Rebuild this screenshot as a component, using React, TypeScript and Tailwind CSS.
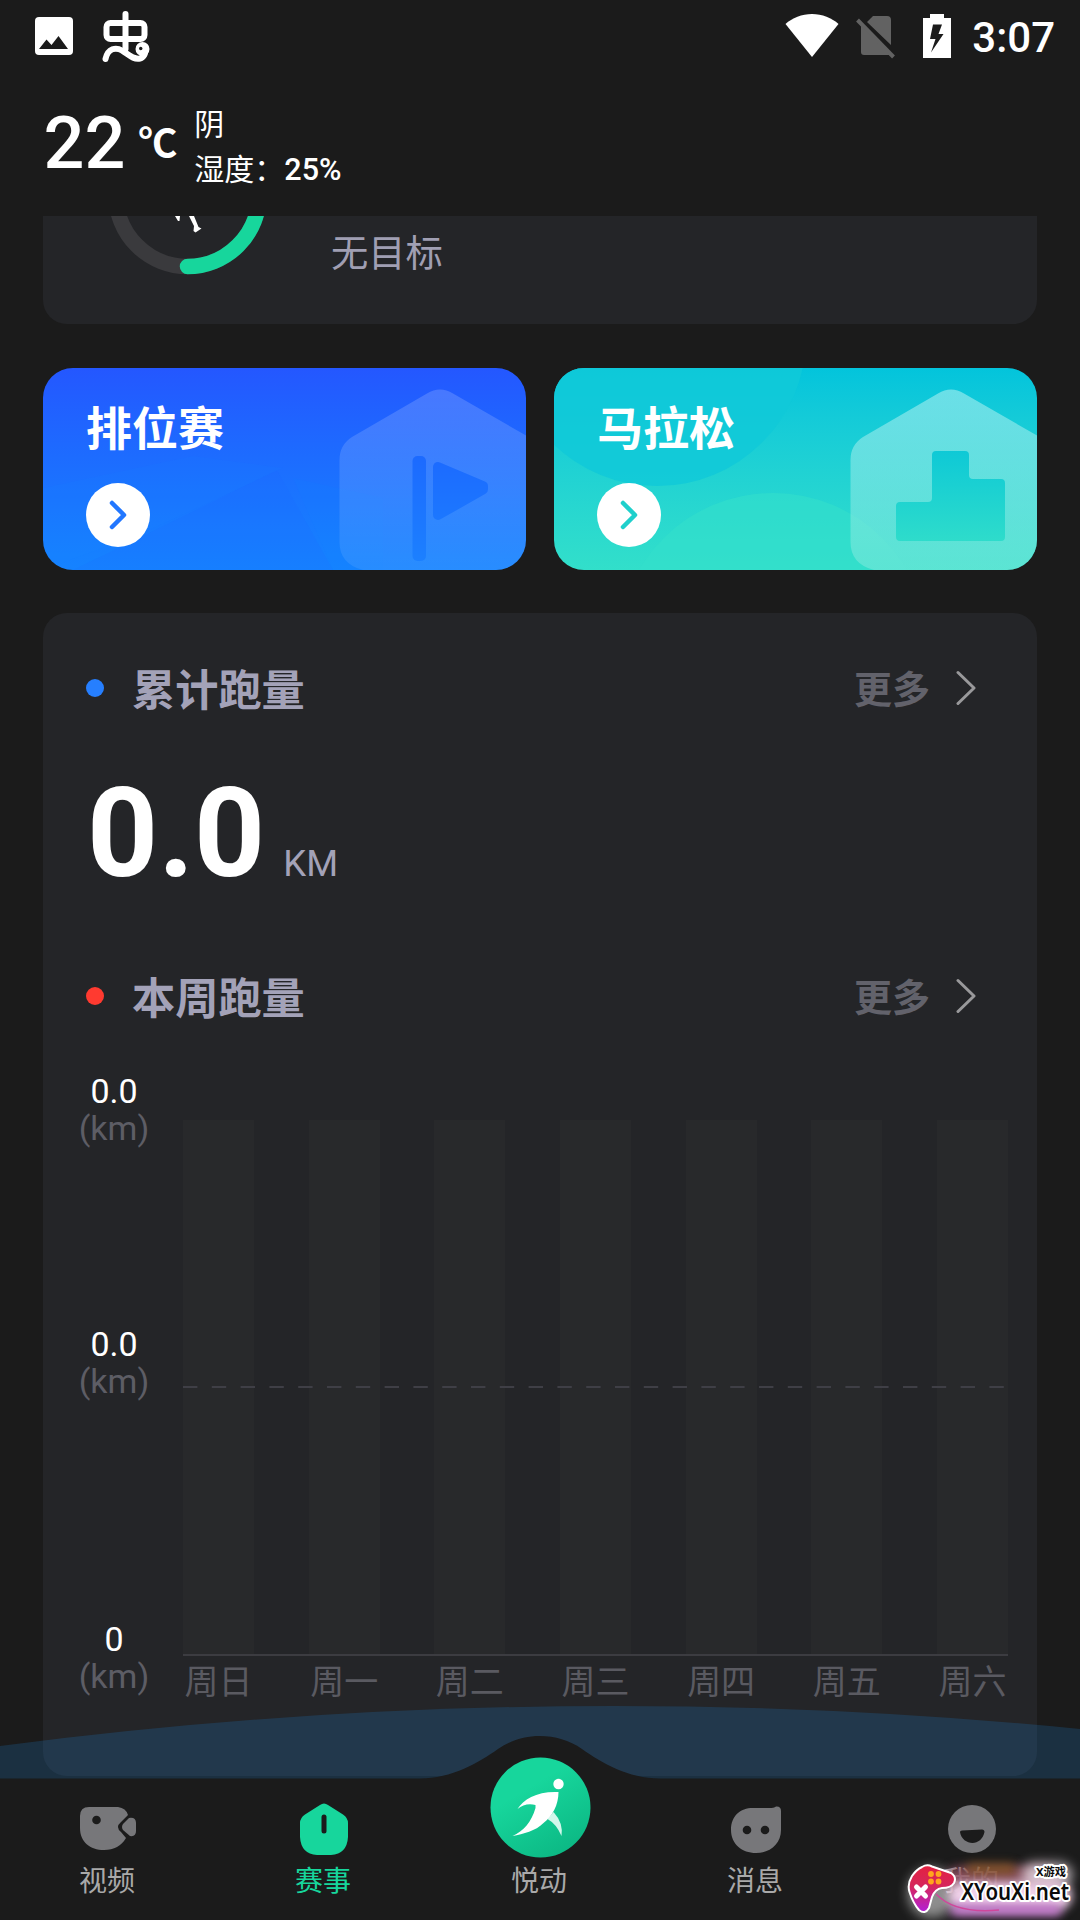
import type { ReactNode } from "react";

interface RaceCardProps {
  title: string;
  className: string;
  arrowColor: string;
  children: ReactNode;
}

interface SectionTitleProps {
  title: string;
  dotClass: string;
}

interface NavItemProps {
  label: string;
  active?: boolean;
  children: ReactNode;
}

const days = ["周日", "周一", "周二", "周三", "周四", "周五", "周六"];

const HEXAGON =
  "M384 25.500Q397 17.500 410 25.500L483 67.500V202H320Q296.500 196 296.500 174V92Q296.500 77 309 69Z";

function StatusBar() {
  return (
    <div className="flex h-[72px] items-start justify-between pr-[25px] pl-[34px]">
      <div className="flex items-start">
        <svg className="mt-4 h-10 w-10" viewBox="0 0 40 40">
          <rect x="1" y="1" width="38" height="38" rx="4" fill="#fff" />
          <path d="M5 33 12.5 23.5 17.5 29 24.5 20 34 33Z" fill="#1b1b1b" />
        </svg>
        <svg
          className="mt-[10px] ml-7 h-[54px] w-[50px]"
          viewBox="0 0 50 54"
          fill="none"
          stroke="#fff"
          strokeWidth="6"
          strokeLinecap="round"
          strokeLinejoin="round"
        >
          <rect x="4.500" y="13" width="38" height="16" rx="4" />
          <path d="M23.500 4V39" />
          <path d="M3.500 49C6 38 14 37 20 40.500C27 45 32 50 38 48.500C42 47.500 44 43 43 39" />
          <circle cx="40.500" cy="39" r="4" />
          <circle cx="38.700" cy="38.500" r="1.700" fill="#1b1b1b" stroke="none" />
        </svg>
      </div>
      <div className="flex items-start">
        <svg className="mt-[14px] h-[44px] w-[54px]" viewBox="0 0 54 44">
          <path d="M27 43 0.500 10C7 4 17 0 27 0S47 4 53.500 10Z" fill="#fff" />
        </svg>
        <svg className="mt-4 ml-[17px] h-[43px] w-[40px]" viewBox="0 0 40 43">
          <path
            d="M17 0H31Q35 0 35 4V29L11 6ZM5 9.500 34 39H8Q5 39 5 36Z"
            fill="#626262"
          />
          <path d="M1.500 4 37.500 41" stroke="#626262" strokeWidth="4" />
        </svg>
        <svg className="mt-[14px] ml-[27px] h-[44px] w-[28px]" viewBox="0 0 28 44">
          <path d="M7 0H21V4H28V44H0V4H7Z" fill="#fff" />
          <path d="M10 10.500H19L15.500 20H20.500L8 38.500 12.500 25H7Z" fill="#1b1b1b" />
        </svg>
        <span className="mt-[14px] ml-[21px] text-[42px] leading-[48px] font-medium">
          3:07
        </span>
      </div>
    </div>
  );
}

function Weather() {
  return (
    <div className="flex h-36 pl-[43.5px]">
      <span className="mt-[32px] text-[72px] leading-[80px] font-medium">22</span>
      <span className="mt-[49px] ml-[13px] text-[39px] leading-[46px] font-bold">℃</span>
      <div className="mt-[35px] ml-[17px] text-[30px]">
        <p className="h-[45px] leading-[36px]">阴</p>
        <p className="leading-[36px]">
          湿度：<span className="text-[30.5px] font-medium">25%</span>
        </p>
      </div>
    </div>
  );
}

function GoalCard() {
  return (
    <div className="flex h-[108px] shrink-0 rounded-b-3xl bg-[#242528]">
      <svg className="ml-[60px] h-[70px] w-[170px]" viewBox="0 0 170 70" fill="none">
        <circle cx="84.500" cy="-21" r="71.500" stroke="#3a3a3d" strokeWidth="15.500" />
        <path
          d="M84.500 50.500A71.500 71.500 0 0 0 156 -21"
          stroke="#17d69c"
          strokeWidth="15.500"
          strokeLinecap="round"
        />
        <path d="M72 0H77L76.500 5H75ZM86 0H91L95.500 11 98.500 12.500 92.500 16.500 90.500 15 91 10Z" fill="#fff" />
      </svg>
      <p className="mt-[12px] ml-[58px] text-[37.3px] leading-[52px] text-[#a09fb3]">无目标</p>
    </div>
  );
}

function RaceCard({ title, className, arrowColor, children }: RaceCardProps) {
  return (
    <div className={`relative h-[202px] w-[483px] overflow-hidden rounded-[30px] ${className}`}>
      {children}
      <div className="relative flex h-full flex-col items-start pt-[31px] pl-[43px]">
        <h2 className="text-[46px] leading-[60px] font-bold">{title}</h2>
        <div className="mt-[24px] flex h-16 w-16 items-center justify-center rounded-full bg-white">
          <svg className="h-[30px] w-[18px]" viewBox="0 0 18 30" fill="none">
            <path
              d="M3 3 15 15 3 27"
              stroke={arrowColor}
              strokeWidth="4.500"
              strokeLinecap="round"
              strokeLinejoin="round"
            />
          </svg>
        </div>
      </div>
    </div>
  );
}

function RankedArt() {
  return (
    <svg className="absolute inset-0 h-full w-full" viewBox="0 0 483 202">
      <defs>
        <linearGradient id="flag" gradientUnits="userSpaceOnUse" x1="0" y1="88" x2="0" y2="193">
          <stop offset="0" stopColor="#1c6aff" />
          <stop offset="1" stopColor="#1c80ff" />
        </linearGradient>
        <linearGradient id="hexBlue" x1="0" y1="0" x2="0" y2="1">
          <stop offset="0" stopColor="#fff" stopOpacity="0.17" />
          <stop offset="1" stopColor="#fff" stopOpacity="0.08" />
        </linearGradient>
      </defs>
      <path d="M150 88 240 100 100 165 0 202V120Z" fill="#148bff" opacity="0.08" />
      <path d="M234 102 290 202H30L145 146Z" fill="#1f5fff" opacity="0.12" />
      <path d="M250 110 340 130V202H290Z" fill="#1090ff" opacity="0.08" />
      <path d={HEXAGON} fill="url(#hexBlue)" />
      <rect x="369.500" y="88" width="13.500" height="105" rx="5" fill="url(#flag)" />
      <path
        d="M395 99V147L440 121.500V118Z"
        fill="url(#flag)"
        stroke="url(#flag)"
        strokeWidth="10"
        strokeLinejoin="round"
      />
    </svg>
  );
}

function MarathonArt() {
  return (
    <svg className="absolute inset-0 h-full w-full" viewBox="0 0 483 202">
      <defs>
        <linearGradient id="podium" x1="0" y1="0" x2="0" y2="1">
          <stop offset="0" stopColor="#0ec9d6" />
          <stop offset="1" stopColor="#2edccb" />
        </linearGradient>
        <linearGradient id="hexTeal" x1="0" y1="0" x2="0" y2="1">
          <stop offset="0" stopColor="#a5eef0" stopOpacity="0.62" />
          <stop offset="1" stopColor="#a5eee4" stopOpacity="0.36" />
        </linearGradient>
      </defs>
      <circle cx="103" cy="-31" r="149" fill="#10c9d8" opacity="0.85" />
      <circle cx="219" cy="280" r="155" fill="#34dfcb" opacity="0.6" />
      <path d={HEXAGON} fill="url(#hexTeal)" />
      <path
        d="M382 83H411Q415 83 415 87V107Q415 111 419 111H447Q451 111 451 115V169Q451 173 447 173H346Q342 173 342 169V138Q342 134 346 134H374Q378 134 378 130V87Q378 83 382 83Z"
        fill="url(#podium)"
      />
    </svg>
  );
}

function SectionTitle({ title, dotClass }: SectionTitleProps) {
  return (
    <div className="flex h-[60px] items-center pr-[61px] pl-[43px]">
      <span className={`mb-[7px] h-[18px] w-[18px] rounded-full ${dotClass}`} />
      <h3 className="mt-[2px] ml-7 text-[43.2px] leading-[60px] font-bold text-[#a3a2b8]">{title}</h3>
      <span className="mb-[3px] ml-auto text-[38px] leading-[56px] font-bold text-[#62626b]">更多</span>
      <svg className="mb-[6px] ml-[26px] h-[36px] w-[20px]" viewBox="0 0 20 36" fill="none">
        <path
          d="M2 2.500 18 18 2 33.500"
          stroke="#99999b"
          strokeWidth="3"
          strokeLinecap="round"
          strokeLinejoin="round"
        />
      </svg>
    </div>
  );
}

function AxisLabel({ value }: { value: string }) {
  return (
    <div className="text-center text-[34px] leading-[37px]">
      <p>{value}</p>
      <p className="text-[#5d5d65]">(km)</p>
    </div>
  );
}

function WeekChart() {
  return (
    <div className="flex">
      <div className="ml-[34px] flex w-[74px] flex-col">
        <AxisLabel value="0.0" />
        <div className="mt-[179px]">
          <AxisLabel value="0.0" />
        </div>
        <div className="mt-[221px]">
          <AxisLabel value="0" />
        </div>
      </div>
      <div className="mt-[47px] ml-8 w-[825px]">
        <div className="relative flex h-[536px] justify-between border-b-2 border-[#3c3c41]">
          {days.map((day) => (
            <div key={day} className="h-full w-[71px] bg-[#28292b]" />
          ))}
          <svg className="absolute top-[266px] left-0 h-[2px] w-[825px]" viewBox="0 0 825 2">
            <path d="M0 1H825" stroke="#3f3f46" strokeWidth="2" strokeDasharray="14.400 14.400" />
          </svg>
        </div>
        <div className="mt-1 flex justify-between">
          {days.map((day) => (
            <span key={day} className="w-[71px] text-center text-[34px] leading-[44px] text-[#5a5a61]">
              {day}
            </span>
          ))}
        </div>
      </div>
    </div>
  );
}

function NavItem({ label, active, children }: NavItemProps) {
  return (
    <div className="flex w-[216px] flex-col items-center">
      <div className="flex h-[108px] items-end justify-center">{children}</div>
      <span
        className={`mr-[2px] text-[28px] leading-[40px] ${active ? "text-[#17d69c]" : "text-[#a9a9a9]"}`}
      >
        {label}
      </span>
    </div>
  );
}

function BottomNav() {
  return (
    <nav className="absolute inset-x-0 bottom-0 h-[220px]">
      <svg className="absolute inset-0 h-full w-full" viewBox="0 0 1080 220">
        <path d="M0 46Q540 -24.400 1080 29V79H0Z" fill="#2085de" opacity="0.2" />
        <path
          d="M0 78.500H420C452 78.500 478 63 498 49C511 40 525 36 540 36S569 40 582 49C602 63 628 78.500 660 78.500H1080V220H0Z"
          fill="#1b1b1b"
        />
      </svg>
      <div className="relative flex pt-[54px]">
        <NavItem label="视频">
          <svg className="mb-[10px] h-[46px] w-[58px]" viewBox="0 0 58 46" fill="#77777a">
            <path d="M10 1H39Q47 2 49 9L42 16Q36 21 42 26L47 32Q40 44 25 44C11 44 1 36 1 22V10Q1 1 10 1Z" />
            <path d="M50 12Q57 11 57 17V25Q57 31 51 30L44 24Q42 21 44 18Z" />
            <circle cx="17.500" cy="14" r="4.300" fill="#1b1b1b" />
          </svg>
        </NavItem>
        <NavItem label="赛事" active>
          <svg className="mb-[7px] h-[52px] w-[48px]" viewBox="0 0 48 52">
            <path
              d="M20 2Q24 -1 28 2L43 11.500Q48 15 48 20V34Q47 51 31 52H17Q1 51 0 34V20Q0 15 5 11.500Z"
              fill="#17d69c"
            />
            <path d="M24 14V28" stroke="#1b1b1b" strokeWidth="5" strokeLinecap="round" />
          </svg>
        </NavItem>
        <NavItem label="悦动">
          <svg className="mb-[4px] h-[101px] w-[101px]" viewBox="0 0 100 101">
            <defs>
              <linearGradient id="run" x1="0.200" y1="0" x2="0.800" y2="1">
                <stop offset="0.300" stopColor="#17d69c" />
                <stop offset="1" stopColor="#0bb682" />
              </linearGradient>
            </defs>
            <circle cx="50" cy="50.500" r="50" fill="url(#run)" />
            <circle cx="68" cy="27" r="5.200" fill="#fff" />
            <path d="M63 55 57 62Q66 67 71 79Q73 66 63 55Z" fill="#d2f7eb" />
            <path
              d="M68 35C68 48 62 59 53 66C45 74 33 77 22 79C33 74 41 65 45 51L45 48C38 46 32 48 27 52C33 42 47 34 68 35Z"
              fill="#fff"
            />
          </svg>
        </NavItem>
        <NavItem label="消息">
          <svg className="mb-[9px] h-[47px] w-[50px]" viewBox="0 0 50 47">
            <path
              d="M22 2H38Q43 2 45 0.500Q50 0 50 5V24C50 38 39 47 25 47S0 38 0 24C0 10 9 2 22 2Z"
              fill="#77777a"
            />
            <circle cx="16" cy="24" r="4.300" fill="#1b1b1b" />
            <circle cx="34" cy="24" r="4.300" fill="#1b1b1b" />
          </svg>
        </NavItem>
        <NavItem label="我的">
          <svg className="mb-[9px] h-[48px] w-[48px]" viewBox="0 0 48 48">
            <circle cx="24" cy="24" r="24" fill="#77777a" />
            <path d="M12 27Q12 25.500 14 25.500L34 24.500Q36.500 24.500 36.500 27C35 34 30 38 24.500 38S13 34 12 27Z" fill="#1b1b1b" />
          </svg>
        </NavItem>
      </div>
    </nav>
  );
}

function Watermark() {
  return (
    <div className="absolute right-0 bottom-0 h-[70px] w-[180px]">
      <div className="absolute top-[18px] left-[8px] h-[50px] w-[48px] rounded-full bg-white/50 blur-[6px]" />
      <div className="absolute top-[16px] left-[46px] h-[28px] w-[112px] rounded-full bg-[#8e4f60]/85 blur-[5px]" />
      <div className="absolute top-[13px] left-[66px] h-[12px] w-[50px] rounded-full bg-[#8a5a1e]/70 blur-[5px]" />
      <div className="absolute top-[13px] left-[122px] h-[24px] w-[50px] rounded-full bg-[#e8dfe6]/80 blur-[6px]" />
      <div className="absolute top-[32px] left-[48px] h-[28px] w-[124px] rounded-full bg-[#f0d2ea] blur-[5px]" />
      <div className="absolute top-[54px] left-[50px] h-[12px] w-[112px] rounded-full bg-[#c77bd0] blur-[5px]" />
      <svg className="absolute top-[14px] left-[7px] h-[52px] w-[110px]" viewBox="0 0 110 52">
        <defs>
          <linearGradient id="pad" x1="0" y1="0" x2="0" y2="1">
            <stop offset="0" stopColor="#e4213f" />
            <stop offset="0.450" stopColor="#d5265c" />
            <stop offset="1" stopColor="#b21fd8" />
          </linearGradient>
        </defs>
        <path d="M29 30Q48 50 92 46" fill="none" stroke="#d0479b" strokeWidth="1.500" />
        <path
          d="M15 3Q20 0 25 2.500L44 9Q50 13 47 19Q44 24 35 24Q28 25 25 33L22 44Q18 51 12 46Q6 39 2.500 28Q0 20 5 12Q9 6 15 3Z"
          fill="url(#pad)"
          stroke="#fff"
          strokeWidth="2"
        />
        <path d="M9.500 23 18.500 32M18.500 23 9.500 32" stroke="#fff" strokeWidth="5" strokeLinecap="round" />
        <g fill="#ffa51e">
          <circle cx="24" cy="10" r="2.900" />
          <circle cx="31.500" cy="10" r="2.900" />
          <circle cx="24" cy="17.500" r="2.900" />
          <circle cx="31.500" cy="17.500" r="2.900" />
        </g>
      </svg>
      <svg className="absolute inset-0 h-full w-full" viewBox="0 0 180 70">
        <g fill="#0b0b0b" stroke="#fff" strokeLinejoin="round" paintOrder="stroke" fontWeight="700">
          <text
            x="136"
            y="26"
            fontSize="11"
            strokeWidth="4"
            textLength="30"
            lengthAdjust="spacingAndGlyphs"
            fontFamily='"Noto Sans", "Noto Sans CJK SC", sans-serif'
          >
            X游戏
          </text>
          <text
            x="61"
            y="50"
            fontSize="24"
            strokeWidth="4"
            fontWeight="600"
            textLength="108"
            lengthAdjust="spacingAndGlyphs"
            fontFamily='"Noto Sans", sans-serif'
          >
            XYouXi.net
          </text>
        </g>
      </svg>
    </div>
  );
}

export default function App() {
  return (
    <div className="relative flex h-[1920px] w-[1080px] flex-col overflow-hidden bg-[#1b1b1b] font-['Roboto','Noto_Sans_CJK_SC',sans-serif] text-white">
      <StatusBar />
      <Weather />
      <main className="flex flex-col px-[43px]">
        <GoalCard />

        <div className="mt-[44px] flex justify-between">
          <RaceCard
            title="排位赛"
            className="bg-linear-to-b from-[#2457ff] to-[#1583ff]"
            arrowColor="#2277ff"
          >
            <RankedArt />
          </RaceCard>
          <RaceCard
            title="马拉松"
            className="bg-linear-to-b from-[#03c4dc] to-[#32dfca]"
            arrowColor="#1fd0cc"
          >
            <MarathonArt />
          </RaceCard>
        </div>

        <section className="mt-[43px] h-[1163px] rounded-3xl bg-[#242528] pt-[48px]">
          <SectionTitle title="累计跑量" dotClass="bg-[#267fff]" />
          <div className="mt-[40px] flex h-[145px] items-baseline pl-[44px]">
            <span className="text-[124px] leading-[145px] font-bold">0.0</span>
            <span className="ml-[18px] text-[36.5px] text-[#a3a2b8]">KM</span>
          </div>
          <div className="mt-[63px]">
            <SectionTitle title="本周跑量" dotClass="bg-[#ff3a30]" />
          </div>
          <div className="mt-[44px]">
            <WeekChart />
          </div>
        </section>
      </main>
      <BottomNav />
      <Watermark />
    </div>
  );
}
